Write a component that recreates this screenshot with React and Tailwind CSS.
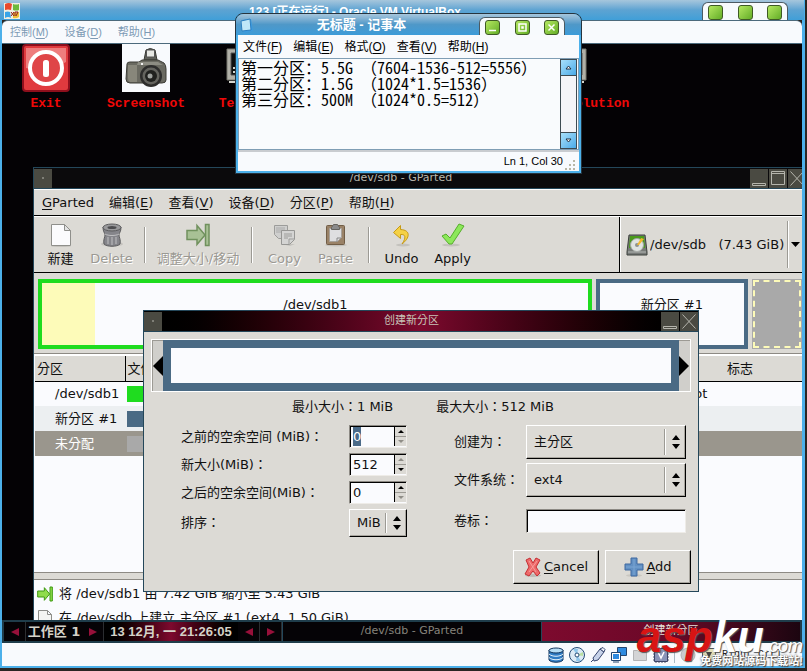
import React, { useEffect, useRef } from 'react';

const NewIcon = () => (
  <svg width="24" height="24" viewBox="0 0 24 24">
    <ellipse cx="12" cy="23" rx="10" ry="1" fill="#c4c2bd" />
    <path d="M2.500 1.500h13l6 6v15h-19z" fill="#fbfbfd" stroke="#8f8f8b" />
    <path d="M15.500 1.500v6h6z" fill="#e3e3e3" stroke="#8f8f8b" />
  </svg>
);

const TrashIcon = () => (
  <svg width="24" height="24" viewBox="0 0 24 24">
    <ellipse cx="12" cy="21" rx="11" ry="2.500" fill="#c4c2bd" />
    <path d="M3 4c0 5 2 6 2 8s-2 5-1 9c3 3 13 3 16 0 1-4-1-7-1-9s2-3 2-8z" fill="#85858a" stroke="#5c5c5e" />
    <ellipse cx="12" cy="4.500" rx="9" ry="3.500" fill="#9a9a9c" stroke="#5c5c5e" />
    <ellipse cx="12" cy="4.500" rx="4.500" ry="1.500" fill="#4d4d50" />
    <path d="M5 11c3 2 11 2 14 0M8 14v7M12 14v8M16 14v7" stroke="#c0c0c2" fill="none" />
  </svg>
);

const ResizeIcon = ({ size = 24, faded }) => (
  <svg width={size} height={size} viewBox="0 0 24 24" opacity={faded ? 0.8 : 1}>
    <path d="M1 7.500h10V2.500l8 9.500-8 9.500v-5H1z" fill={faded ? '#9cbc86' : '#8fdc4b'} stroke={faded ? '#567f40' : '#3f9a12'} strokeWidth="1.500" />
    <path d="M19.500 1.500h3.500v21h-3.500z" fill={faded ? '#9cbc86' : '#8fdc4b'} stroke={faded ? '#567f40' : '#3f9a12'} strokeWidth="1.500" />
  </svg>
);

const CopyIcon = () => (
  <svg width="24" height="24" viewBox="0 0 24 24">
    <path d="M8 21h14l-5 2z" fill="#c4c2bd" />
    <path d="M1.500 2.500h13v13h-9l-4-4z" fill="#cfcfce" stroke="#9c9c9a" />
    <path d="M3 5h9M3 7h9M3 9h8" stroke="#aaa" />
    <path d="M8.500 7.500h13v9l-5 5h-8z" fill="#d4d4d3" stroke="#969694" />
    <path d="M21 16h-5v5M11 11h8M11 13h8M11 15h4" stroke="#9c9c9a" fill="none" />
  </svg>
);

const PasteIcon = () => (
  <svg width="24" height="24" viewBox="0 0 24 24">
    <ellipse cx="12" cy="22" rx="11" ry="1.500" fill="#c4c2bd" />
    <rect x="2.500" y="2.500" width="18" height="19" rx="1" fill="#9a8267" stroke="#715d46" />
    <path d="M5.500 5.500h12v9l-4 4h-8z" fill="#dedee0" stroke="#a7a19a" />
    <path d="M7.500 4.500l2-3h4l2 3v2h-8z" fill="#8b8b8b" stroke="#66645f" />
    <path d="M17 15h-4v4" stroke="#888" fill="none" />
  </svg>
);

const UndoIcon = () => (
  <svg width="24" height="24" viewBox="0 0 24 24">
    <ellipse cx="13" cy="22" rx="7" ry="1.500" fill="#c4c2bd" />
    <path d="M10.500 2.500L3.500 9.500l7 6v-4c5-.5 6 3 1.500 9.500 8-6 9-14-1.500-14.500z" fill="#f5d145" stroke="#c69a15" strokeLinejoin="round" />
  </svg>
);

const ApplyIcon = () => (
  <svg width="24" height="24" viewBox="0 0 24 24">
    <ellipse cx="10" cy="22" rx="9" ry="1.500" fill="#c4c2bd" />
    <path d="M1 13l4-2 4 4L18 1l5 2L11 21H8z" fill="#8ce85a" stroke="#57ae2c" strokeLinejoin="round" />
  </svg>
);

const DiskIcon = () => (
  <svg width="22" height="22" viewBox="0 0 22 22">
    <path d="M3 1h16l2 17v3H1v-3z" fill="#777a78" stroke="#3c403c" />
    <path d="M4 2h14l1 12H3z" fill="#4b9a1c" />
    <circle cx="11" cy="11" r="6.500" fill="#dfe3e0" stroke="#a1a5a2" />
    <circle cx="11" cy="11" r="2" fill="#8d918e" />
    <path d="M11 11l4-7 3 1-5 6z" fill="#f3b72c" />
    <path d="M2 18h18" stroke="#b5b8b5" />
  </svg>
);

const CancelIcon = () => (
  <svg width="18" height="20" viewBox="0 0 18 20">
    <ellipse cx="9" cy="18.500" rx="8" ry="1.500" fill="#bdbab5" />
    <path d="M2 3l4-2 3 5 3-5 4 2-4 7 4 6-3 3-4-5-4 5-4-2 4-7z" fill="#ee6a6a" stroke="#c52f34" strokeLinejoin="round" />
    <path d="M5 4l7 11M13 4L5 15" stroke="#f79c9c" />
  </svg>
);

const AddIcon = () => (
  <svg width="20" height="20" viewBox="0 0 20 20">
    <ellipse cx="10" cy="18.500" rx="8" ry="1.500" fill="#c9c6c0" />
    <path d="M7 1h6v6h6v6h-6v6H7v-6H1V7h6z" fill="#6290c3" stroke="#3e69a0" />
    <path d="M10 2v16M2 10h16" stroke="#7aa5d3" />
  </svg>
);

const ExitIcon = () => (
  <svg width="48" height="48" viewBox="0 0 48 48">
    <rect x="1" y="1" width="46" height="46" rx="3" fill="#e03a3e" stroke="#8e0f1c" strokeWidth="2" />
    <path d="M4 4h40v14Q24 30 4 24z" fill="#ee7d7d" />
    <circle cx="24" cy="24" r="16" fill="#df4547" stroke="#fff" strokeWidth="4" />
    <rect x="21" y="16" width="6" height="17" rx="2.500" fill="#fff" />
  </svg>
);

const CameraIcon = () => (
  <svg width="48" height="48" viewBox="0 0 48 48">
    <path fill="#f8fafd" d="M0 0h48v48H0z" />
    <path d="M22 16l2-10q4-3 9 0l2 10z" fill="#5f605a" stroke="#383934" />
    <path d="M24.500 6h8v7h-8z" fill="#e7e8e4" stroke="#555" />
    <path d="M5 20q0-2 3-2h9l3-2h16l6 3q2 2 2 6v11q0 3-4 3H8q-4 0-4-4z" fill="#6a6a61" stroke="#3c3c36" />
    <path d="M6 21h9v17H8q-2-1-2-4z" fill="#88877b" />
    <path d="M16 18h20l5 3H15z" fill="#8d8d83" />
    <circle cx="29" cy="32" r="11" fill="#2d2d2c" />
    <circle cx="29" cy="32" r="8.500" fill="#64645f" />
    <circle cx="29" cy="32" r="6" fill="#20211f" />
    <circle cx="28" cy="32" r="2.500" fill="#9fa29f" />
    <path d="M19 19h2v2h-2z" fill="#f2f2f2" />
  </svg>
);

const MonitorIcon = () => (
  <svg width="48" height="40" viewBox="0 0 48 40">
    <path d="M1 5h46v31H1z" fill="#b1b0a8" stroke="#77766f" />
    <path d="M5 9h38v22H5z" fill="#0d0f10" stroke="#555" />
    <path d="M7 24h3M7 28h3M3 38h42" stroke="#d6d6ce" strokeWidth="2" />
  </svg>
);

const WindowsLogo = () => (
  <svg width="16" height="16" viewBox="0 0 16 16">
    <path fill="#f1efe2" d="M0 0h16v16H0z" />
    <path d="M1 1q4-2 7 0l-1 6q-3-1-6 0z" fill="#e8492c" />
    <path d="M9 1q3 1 6 0v6q-3 1-6 0z" fill="#6cba3b" />
    <path d="M1 9q3-1 5 0l1 6q-3-2-6 0z" fill="#38a5e8" />
    <path d="M9 9q3 1 6 0v5q-3 2-6 1z" fill="#eec23b" />
    <path d="M7 9l3 4M10 9l-3 4M11 13V9h3l-2 4" stroke="#8c1c1c" fill="none" />
  </svg>
);

const NotepadLogo = () => (
  <svg width="14" height="16" viewBox="0 0 14 16">
    <path d="M2 2l9-1 2 12-9 2z" fill="#3d9ade" />
    <path d="M1 3l9-2 1 11-9 1z" fill="#bfe7f8" stroke="#2c7fc0" />
  </svg>
);

// Green caption buttons of the host window theme
const CaptionTab = ({ glyphs }) => (
  <div className="flex h-[18px] w-[86px] justify-between self-end rounded-t-md border border-b-0 border-[#4c5a62] bg-[#f7fafd] px-[5px] pt-0.5">
    {glyphs.map(([label, d]) => (
      <button key={label} aria-label={label} className="h-[15px] w-[15px] shrink-0 rounded-[3px] border border-[#3f5a26] bg-linear-to-br from-[#b4e860] to-[#63ad25]">
        <svg width="13" height="13" viewBox="0 0 13 13">
          <path d={d} stroke="#fff" strokeWidth="1.500" fill="none" />
        </svg>
      </button>
    ))}
  </div>
);

const hostGlyphs = [
  ['Minimize', ''],
  ['Maximize', ''],
  ['Close', ''],
];

const notepadGlyphs = [
  ['Minimize', 'M3 9.500h7'],
  ['Maximize', 'M3 3h7v7h-7zM6 6h1v1h-1z'],
  ['Close', 'M3.500 3.500l6 6M9.500 3.500l-6 6'],
];

const MenuItem = ({ name, accel }) => (
  <button className="whitespace-nowrap">
    {name}(<u className="underline-offset-2">{accel}</u>)
  </button>
);

const WmButton = ({ label, d }) => (
  <button aria-label={label} className="h-[19px] w-[18px] shrink-0 bg-[#4a4a42]">
    <svg width="18" height="19" viewBox="0 0 18 19">
      <path d={d} stroke="#b5b5ad" fill="none" />
    </svg>
  </button>
);

const WM_MENU = 'M9 8v2';
const WM_MIN = 'M2.500 14.500h13v2h-13z';
const WM_MAX = 'M2.500 2.500h13v13h-13zM2.500 4.500h13';
const WM_CLOSE = 'M2.500 2.500l13 14M15.500 2.500l-13 14';

const ToolButton = ({ icon, label, disabled, wide }) => (
  <button
    disabled={disabled}
    className={`flex shrink-0 flex-col items-center whitespace-nowrap ${wide ? 'w-[92px]' : 'w-[51px]'} ${
      disabled ? 'text-[#9b9993] [text-shadow:1px_1px_0_#fff]' : 'text-[#111]'
    }`}
  >
    {icon}
    <span className="mt-1 leading-4">{label}</span>
  </button>
);

const ToolSeparator = () => (
  <div className="flex w-[15px] shrink-0 justify-center">
    <div className="mt-1 h-9 w-0.5 border-l border-[#9c9a94] bg-white" />
  </div>
);

const Arrows = () => (
  <svg width="8" height="14" viewBox="0 0 8 14">
    <path d="M0 5l4-5 4 5zM0 9l4 5 4-5z" fill="#000" />
  </svg>
);

const raised = 'border border-white border-r-black border-b-black shadow-[inset_-1px_-1px_0_#a8a59e]';
const sunken = 'border border-[#8d8a84] border-r-[#eeece8] border-b-[#eeece8] bg-[#fafbfe] shadow-[inset_1px_1px_0_#000]';

const SpinBox = ({ id, value, upOff, downOff, inputRef }) => (
  <div className={`flex h-[23px] w-[58px] ${sunken}`}>
    <input
      id={id}
      ref={inputRef}
      defaultValue={value}
      className="w-full min-w-0 bg-transparent pl-[3px] outline-none selection:bg-[#4a6a88] selection:text-white"
    />
    <div className="my-px flex w-3 shrink-0 flex-col border-l border-black bg-[#dcdad5]">
      <button aria-label="Increase" className="flex flex-1 items-center justify-center border-b border-[#9c9a94]">
        <svg width="6" height="3" viewBox="0 0 6 3"><path d="M0 3l3-3 3 3z" fill={upOff ? '#8f8d87' : '#000'} /></svg>
      </button>
      <button aria-label="Decrease" className="flex flex-1 items-center justify-center">
        <svg width="6" height="3" viewBox="0 0 6 3"><path d="M0 0l3 3 3-3z" fill={downOff ? '#8f8d87' : '#000'} /></svg>
      </button>
    </div>
  </div>
);

const ComboBox = ({ id, value, small }) => (
  <div className={`relative ${small ? 'h-7 w-[58px]' : 'h-[34px] w-[160px]'}`}>
    <select id={id} className={`h-full w-full appearance-none bg-[#dcdad5] px-[7px] ${raised}`}>
      <option>{value}</option>
    </select>
    <div className="pointer-events-none absolute inset-y-1 right-1.5 flex items-center gap-1.5">
      <div className="h-full w-0.5 border-l border-[#9c9a94] bg-white" />
      <Arrows />
    </div>
  </div>
);

const Notepad = () => (
  <section className="absolute top-[13px] left-[235px] z-20 flex w-[347px] flex-col rounded-t-lg border border-[#26343e] bg-[#4cb0ea] px-0.5 pb-0.5 font-['Liberation_Sans','Noto_Sans_CJK_SC',sans-serif] text-[12px] text-black">
    <div className="-mx-0.5 flex h-[21px] rounded-t-lg bg-linear-to-b from-[#a6c6dc] via-[#4f98c8] to-[#3c9bd8] pr-4 pl-1">
      <span className="pt-1"><NotepadLogo /></span>
      <h2 className="flex-1 pr-2.5 text-center text-[13px] leading-[22px] font-bold text-white">无标题 - 记事本</h2>
      <CaptionTab glyphs={notepadGlyphs} />
    </div>
    <nav className="flex h-[23px] items-center gap-[11px] bg-[#f8fafd] pl-[5px]">
      <MenuItem name="文件" accel="F" />
      <MenuItem name="编辑" accel="E" />
      <MenuItem name="格式" accel="O" />
      <MenuItem name="查看" accel="V" />
      <MenuItem name="帮助" accel="H" />
    </nav>
    <div className="flex h-[92px] border border-[#7f9db4] bg-[#f9fbfd] pr-px">
      <textarea
        aria-label="Text"
        readOnly
        className="min-w-0 flex-1 resize-none overflow-hidden pl-0.5 font-['Noto_Sans_Mono_CJK_SC','Noto_Sans_CJK_SC',monospace] text-[16px] leading-4 outline-none"
        value={'第一分区：5.5G （7604-1536-512=5556）\n第二分区：1.5G （1024*1.5=1536）\n第三分区：500M （1024*0.5=512）'}
      />
      <div className="flex w-[17px] shrink-0 flex-col justify-between border border-[#3d4a52] bg-[#f4f4f8]">
        <button aria-label="Scroll up" className="flex h-4 items-center justify-center border-b border-[#3d4a52] bg-linear-to-br from-[#a8e0fa] to-[#48aae8]">
          <svg width="7" height="5" viewBox="0 0 7 5"><path d="M1 4l2.500-3L6 4z" fill="#fff" stroke="#234" /></svg>
        </button>
        <button aria-label="Scroll down" className="flex h-4 items-center justify-center border-t border-[#3d4a52] bg-linear-to-br from-[#a8e0fa] to-[#48aae8]">
          <svg width="7" height="5" viewBox="0 0 7 5"><path d="M1 1l2.500 3L6 1z" fill="#fff" stroke="#234" /></svg>
        </button>
      </div>
    </div>
    <div className="flex h-[21px] items-center justify-end border-t-2 border-[#c9ccd0] bg-[#f8fafd]">
      <span className="text-[11px] whitespace-nowrap">Ln 1, Col 30</span>
      <svg className="self-end" width="16" height="12" viewBox="4 0 16 12">
        <path d="M14 1h2v2h-2zM10 5h2v2h-2zM14 5h2v2h-2zM6 9h2v2H6zM10 9h2v2h-2zM14 9h2v2h-2z" fill="#b9b7a6" />
      </svg>
    </div>
  </section>
);

const PartitionDialog = () => {
  const beforeRef = useRef(null);

  useEffect(() => {
    beforeRef.current.focus();
    beforeRef.current.select();
  }, []);

  return (
    <section className="absolute top-[266px] left-[141px] z-10 w-[556px] border border-[#24475a] bg-[#dcdad5]">
      <header className="flex h-[21px] items-center gap-px border-b border-[#24475a] bg-linear-to-r from-black via-[#7d0a2e] to-black">
        <WmButton label="Window menu" d={WM_MENU} />
        <h2 className="flex-1 text-center text-[11px] text-[#c8c4b8]">创建新分区</h2>
        <WmButton label="Minimize" d={WM_MIN} />
        <WmButton label="Close" d={WM_CLOSE} />
      </header>
      <div className="px-[7px] pt-[7px] pb-[7px]">
        <div className="flex h-[53px] items-center border border-white bg-[#d0cfcb] shadow-[inset_1px_1px_0_#9c9a94]">
          <svg className="ml-px" width="10" height="20" viewBox="0 0 10 20"><path d="M10 0v20L0 10z" /></svg>
          <div className="h-full flex-1 border-8 border-[#4a6a84] bg-[#fafbfe]" />
          <svg className="mr-px" width="10" height="20" viewBox="0 0 10 20"><path d="M0 0v20l10-10z" /></svg>
        </div>
        <div className="mt-1.5 flex gap-[43px] pl-[141px] leading-[18px]">
          <span>最小大小：1 MiB</span>
          <span>最大大小：512 MiB</span>
        </div>
        <form className="mt-[9px] flex justify-between pr-[5px] pl-[30px]">
          <div className="grid grid-cols-[168px_58px] items-center gap-y-[5px]">
            <label htmlFor="before">之前的空余空间 (MiB)：</label>
            <SpinBox id="before" value="0" downOff inputRef={beforeRef} />
            <label htmlFor="size">新大小(MiB)：</label>
            <SpinBox id="size" value="512" upOff />
            <label htmlFor="after">之后的空余空间(MiB)：</label>
            <SpinBox id="after" value="0" downOff />
            <label htmlFor="align">排序：</label>
            <ComboBox id="align" value="MiB" small />
          </div>
          <div className="grid grid-cols-[72px_160px] content-start items-center gap-y-1">
            <label htmlFor="kind">创建为：</label>
            <ComboBox id="kind" value="主分区" />
            <label htmlFor="fs">文件系统：</label>
            <ComboBox id="fs" value="ext4" />
            <label htmlFor="volume" className="mt-2">卷标：</label>
            <input id="volume" className={`mt-2 h-6 w-full px-1 outline-none ${sunken}`} />
          </div>
        </form>
        <div className="mt-[13px] flex justify-end gap-1.5">
          <button className={`flex h-[34px] w-[86px] items-center justify-center gap-0.5 ${raised}`}>
            <CancelIcon />
            <span><u className="underline-offset-2">C</u>ancel</span>
          </button>
          <button className={`flex h-[34px] w-[86px] items-center justify-center gap-0.5 ${raised}`}>
            <AddIcon />
            <span><u className="underline-offset-2">A</u>dd</span>
          </button>
        </div>
      </div>
    </section>
  );
};

const GParted = () => (
  <section className="mt-[123px] ml-[31px] flex flex-1 flex-col overflow-hidden border border-r-0 border-b-0 border-[#24475a] bg-[#dcdad5]">
    <header className="flex h-[21px] shrink-0 items-center gap-px border-b border-[#24475a] bg-[#0b0a0c]">
      <WmButton label="Window menu" d={WM_MENU} />
      <h1 className="flex-1 text-center text-[11px] text-[#b9b7ae]">/dev/sdb - GParted</h1>
      <div className="-mr-1 flex gap-px">
        <WmButton label="Minimize" d={WM_MIN} />
        <WmButton label="Maximize" d={WM_MAX} />
        <WmButton label="Close" d={WM_CLOSE} />
      </div>
    </header>
    <nav className="flex h-[27px] shrink-0 items-center gap-[15px] border-t border-b border-t-white border-b-black pl-2">
      <button><u className="underline-offset-2">G</u>Parted</button>
      <MenuItem name="编辑" accel="E" />
      <MenuItem name="查看" accel="V" />
      <MenuItem name="设备" accel="D" />
      <MenuItem name="分区" accel="P" />
      <MenuItem name="帮助" accel="H" />
    </nav>
    <div className="flex h-[57px] shrink-0 border-t border-b border-t-white border-b-black">
      <div className="flex flex-1 items-start pt-1.5 pl-px">
        <ToolButton icon={<NewIcon />} label="新建" />
        <ToolButton icon={<TrashIcon />} label="Delete" disabled />
        <ToolSeparator />
        <ToolButton icon={<ResizeIcon faded />} label="调整大小/移动" disabled wide />
        <ToolSeparator />
        <ToolButton icon={<CopyIcon />} label="Copy" disabled />
        <ToolButton icon={<PasteIcon />} label="Paste" disabled />
        <ToolSeparator />
        <ToolButton icon={<UndoIcon />} label="Undo" />
        <ToolButton icon={<ApplyIcon />} label="Apply" />
      </div>
      <div className="relative w-[183px] border-l border-black">
        <select aria-label="Device" className="h-full w-full appearance-none border-l border-white pl-[29px]">
          <option>{'/dev/sdb\u00a0\u00a0\u00a0(7.43 GiB)'}</option>
        </select>
        <div className="pointer-events-none absolute inset-y-1 left-1.5 flex items-center"><DiskIcon /></div>
        <div className="pointer-events-none absolute inset-y-1 right-0.5 flex items-center gap-0.5">
          <div className="h-full w-0.5 border-l border-[#9c9a94] bg-white" />
          <svg width="9" height="5" viewBox="0 0 9 5"><path d="M0 0h9L4.500 5z" /></svg>
        </div>
      </div>
    </div>
    <div className="mt-1.5 ml-1 grid h-[70px] shrink-0 grid-cols-[553fr_152fr_50px] gap-1">
      <div className="flex border-4 border-[#1fdc1f] bg-[#fafbfe]">
        <div className="w-[53px] bg-[#fdfbb9]" />
        <span className="flex-1 pt-3 pr-[52px] text-center">/dev/sdb1</span>
      </div>
      <div className="border-4 border-[#4a6a84] bg-[#fafbfe] pt-3 text-center">新分区 #1</div>
      <div className="bg-[#a9a9a9] p-px">
        <div className="h-full border-2 border-dashed border-[#fdfbb9]" />
      </div>
    </div>
    <div className="mt-1 flex-1 border-t border-[#8d8a84] bg-[#fafbfe] pl-px">
      <table className="w-full table-fixed border-collapse text-left">
        <colgroup>
          <col className="w-[90px]" />
          <col className="w-[90px]" />
          <col />
          <col className="w-[124px]" />
        </colgroup>
        <thead>
          <tr className="h-[26px] border-t-2 border-b border-t-white border-b-black bg-[#dcdad5]">
            <th className="border-r border-black pl-0.5 font-normal">分区</th>
            <th className="pl-0.5 font-normal">文件系统</th>
            <td />
            <th className="text-center font-normal">标志</th>
          </tr>
        </thead>
        <tbody>
          <tr className="h-[25px]">
            <td className="pl-5">/dev/sdb1</td>
            <td><div className="ml-0.5 h-4 w-4 bg-[#1fdc1f]" /></td>
            <td />
            <td>boot</td>
          </tr>
          <tr className="h-[25px] bg-[#eceff1]">
            <td className="pl-5 whitespace-nowrap">新分区 #1</td>
            <td><div className="ml-0.5 h-4 w-4 bg-[#4a6a84]" /></td>
            <td />
            <td />
          </tr>
          <tr className="h-[25px] bg-[#9a968d] text-white">
            <td className="pl-5">未分配</td>
            <td><div className="ml-0.5 h-4 w-4 bg-[#a9a9a9]" /></td>
            <td />
            <td />
          </tr>
        </tbody>
      </table>
    </div>
    <div className="h-2 shrink-0 border-t border-b border-[#8d8a84]" />
    <ul className="h-10 shrink-0 overflow-hidden bg-[#fafbfe] pt-0.5 pl-[3px] leading-6 whitespace-nowrap">
      <li className="flex items-center gap-1.5">
        <ResizeIcon size={16} />
        将 /dev/sdb1 由 7.42 GiB 缩小至 5.43 GiB
      </li>
      <li className="flex items-center gap-1.5">
        <svg width="16" height="16" viewBox="0 0 16 16">
          <path d="M1.500.5h9l4 4v11h-13zM10.500.5v4h4" fill="#f4f4f2" stroke="#8d8d89" />
        </svg>
        在 /dev/sdb 上建立 主分区 #1 (ext4, 1.50 GiB)
      </li>
    </ul>
  </section>
);

const ArrowCell = ({ label, left }) => (
  <button aria-label={label} className="flex w-[22px] shrink-0 items-center justify-center border-r border-[#2b2d30]">
    <svg width="8" height="8" viewBox="0 0 8 8"><path d={left ? 'M8 0v8L0 4z' : 'M0 0v8l8-4z'} fill="#97103a" /></svg>
  </button>
);

const Taskbar = () => (
  <div className="z-10 flex h-[23px] shrink-0 border-2 border-[#1f3d4b] bg-[#050306] text-[13px] font-bold text-[#d5d2c8]">
    <ArrowCell label="Previous workspace" left />
    <span className="w-[56px] text-center leading-[19px] whitespace-nowrap">工作区 1</span>
    <ArrowCell label="Next workspace" />
    <time className="w-[134px] bg-linear-to-r from-black via-[#7d0a2e] to-black text-center font-['Liberation_Sans','Noto_Sans_CJK_SC',sans-serif] leading-[19px] whitespace-nowrap">
      13 12月, 一 21:26:05
    </time>
    <ArrowCell label="Previous window" left />
    <ArrowCell label="Next window" />
    <button className="flex-1 border-r border-l border-[#24475a] text-[11px] font-normal text-[#85837c]">/dev/sdb - GParted</button>
    <button className="flex-1 bg-linear-to-r from-[#7d0a2e] via-[#6b0828] to-[#1c0510] text-[11px] font-normal text-[#e6e3dc]">创建新分区</button>
  </div>
);

const StatusBar = () => (
  <footer className="flex h-[23px] shrink-0 items-center justify-end gap-[5px] bg-[#f8fafd] pr-5">
    <svg width="16" height="16" viewBox="0 0 16 16">
      <path d="M1 3v10c2 3 12 3 14 0V3z" fill="#2f7cc4" stroke="#14365e" />
      <path d="M1 7c3 3 11 3 14 0M1 10.500c3 3 11 3 14 0" stroke="#e8f4fc" fill="none" />
      <ellipse cx="8" cy="3.500" rx="7" ry="2.500" fill="#b7def5" stroke="#14365e" />
    </svg>
    <svg width="16" height="16" viewBox="0 0 16 16">
      <circle cx="8" cy="8" r="7.500" fill="#dceaf5" stroke="#234a75" />
      <path d="M8 8L4 2h5zM8 8l4 6H7z" fill="#8ec6ea" />
      <path d="M8 8l6-3v4z" fill="#b9e0a3" />
      <circle cx="8" cy="8" r="2" fill="#fff" stroke="#234a75" />
    </svg>
    <svg width="16" height="16" viewBox="0 0 16 16">
      <path d="M1 15l3-3M3 11l7-9 4 3-6 8-4 1z" fill="#c7d3ea" stroke="#36456e" />
      <path d="M10 2l3-1.500 2 2L14 5z" fill="#f0f3fa" stroke="#36456e" />
    </svg>
    <svg width="16" height="16" viewBox="0 0 16 16">
      <path d="M6.500.5h9v8h-9z" fill="#2f8be0" stroke="#23456f" />
      <path d="M.5 5.500h9v8h-9z" fill="#fff" stroke="#23456f" />
      <path d="M2 7h6v5H2z" fill="#2f8be0" />
      <path d="M2 15h6" stroke="#23456f" />
    </svg>
    <svg width="16" height="16" viewBox="0 0 16 16">
      <path d="M1.500 3.500h4l1 1h8v9h-13z" fill="#d3d4d6" stroke="#b2b3b5" />
    </svg>
    <svg width="16" height="16" viewBox="0 0 16 16">
      <path d="M3 0v16M6 0v16M9 0v16M12 0v16M0 4h16M0 7h16M0 10h16M0 13h16" stroke="#555b75" />
      <path d="M1.500 1.500h13v13h-13z" fill="#8a94b8" stroke="#3c4466" />
      <path d="M5 5l3 6 3-6" stroke="#fff" strokeWidth="1.500" fill="none" />
    </svg>
    <div className="h-4 w-px bg-[#a9b9c6]" />
    <svg width="16" height="16" viewBox="0 0 16 16"><circle cx="8" cy="8" r="7" fill="#c9cbce" stroke="#b0b2b5" /></svg>
    <svg width="16" height="16" viewBox="0 0 16 16"><path d="M1.500 1.500h13v13h-13z" fill="#e3dfb8" stroke="#555" /><path d="M5 5h6L8 11z" fill="#444" /></svg>
    <span className="font-['Liberation_Mono',monospace] text-[10px] text-[#222]">Right Ctrl</span>
  </footer>
);

const DesktopIcon = ({ icon, label, place }) => (
  <div className={`absolute top-0 flex w-12 flex-col items-center ${place}`}>
    <div className="h-12 w-12">{icon}</div>
    <span className="mt-1 font-['Liberation_Mono',monospace] text-[13px] leading-4 font-bold whitespace-nowrap text-[#f00808]">{label}</span>
  </div>
);

const Watermark = () => (
  <div className="pointer-events-none absolute right-1 bottom-0 z-30 font-['Liberation_Sans','Noto_Sans_CJK_SC',sans-serif] text-white italic">
    <div className="flex items-baseline leading-[50px] [text-shadow:1px_1px_1px_#555]">
      <span className="text-[44px] font-bold text-[#d81414]">asp</span>
      <span className="text-[44px] font-bold">ku</span>
      <span className="text-[18px]">.com</span>
    </div>
    <div className="absolute right-0 bottom-1 text-[11px] leading-3 font-bold whitespace-nowrap not-italic [text-shadow:0_0_2px_#444,1px_1px_1px_#444]">
      免费网站源码下载站!
    </div>
  </div>
);

const App = () => {
  return (
    <div className="relative flex min-h-screen flex-col bg-[#2a2624] pr-0.5 pb-[3px] font-['DejaVu_Sans','Noto_Sans_CJK_TC',sans-serif] text-[13px] text-[#111]">
      <div className="flex flex-1 flex-col border-r-3 border-b-2 border-l-2 border-[#4cb0ea]">
        <header className="-mx-0.5 flex h-5 shrink-0 bg-linear-to-b from-[#a6c6dc] via-[#5da3d2] to-[#3f9fd8] pr-4 pl-1">
          <span className="pt-[3px]"><WindowsLogo /></span>
          <div className="flex-1 pr-3 text-center font-['Liberation_Sans','Noto_Sans_CJK_SC',sans-serif] text-[12px] leading-6 font-bold text-white">
            123 [正在运行] - Oracle VM VirtualBox
          </div>
          <CaptionTab glyphs={hostGlyphs} />
        </header>
        <nav className="flex h-6 shrink-0 items-center gap-4 rounded-t-md border-t border-b border-[#4c6a7c] bg-[#f8fafd] pl-2 font-['Liberation_Sans','Noto_Sans_CJK_SC',sans-serif] text-[11px] text-[#7d9ab5]">
          <MenuItem name="控制" accel="M" />
          <MenuItem name="设备" accel="D" />
          <MenuItem name="帮助" accel="H" />
        </nav>
        <main className="relative flex flex-1 flex-col bg-[#040205]">
          <DesktopIcon icon={<ExitIcon />} label="Exit" place="left-5" />
          <DesktopIcon icon={<CameraIcon />} label="Screenshot" place="left-[120px]" />
          <DesktopIcon icon={<MonitorIcon />} label="Terminal" place="left-[224px]" />
          <DesktopIcon icon={<MonitorIcon />} label="Screen resolution" place="left-[537px]" />
          <GParted />
          <PartitionDialog />
          <Taskbar />
        </main>
        <StatusBar />
      </div>
      <Notepad />
      <Watermark />
    </div>
  );
};

export default App;
